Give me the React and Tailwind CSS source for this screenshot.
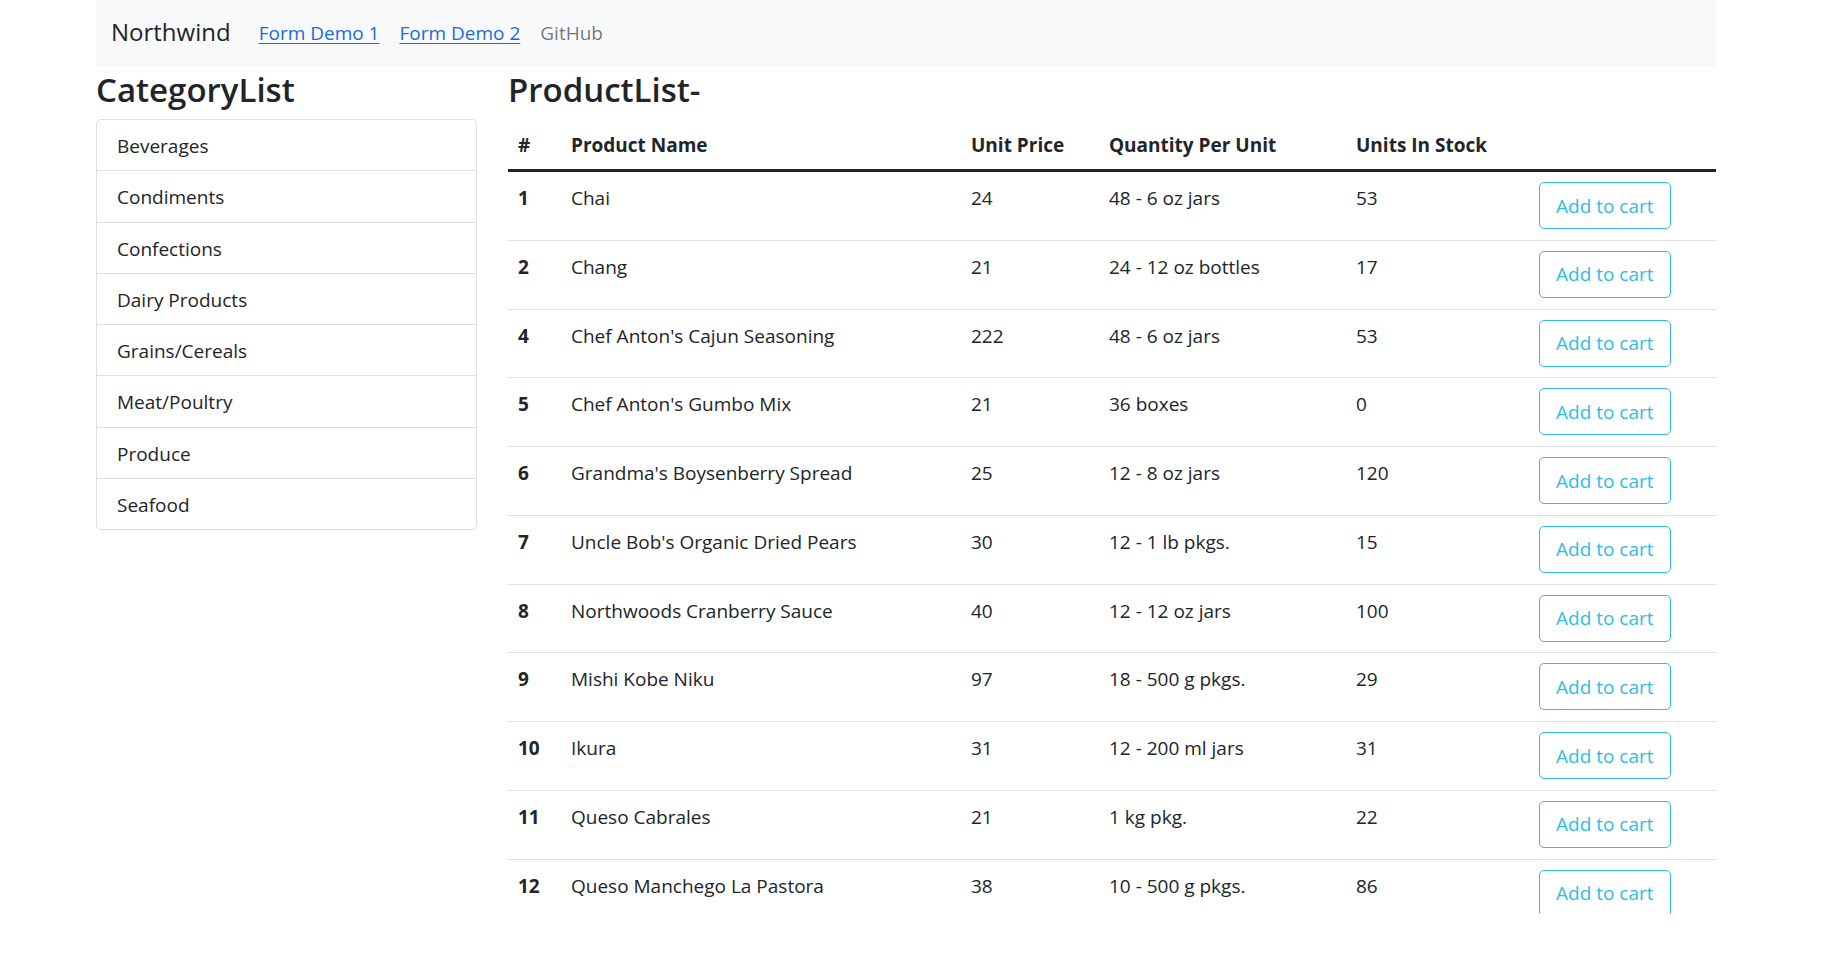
import React from "react";

const categories = [
  "Beverages",
  "Condiments",
  "Confections",
  "Dairy Products",
  "Grains/Cereals",
  "Meat/Poultry",
  "Produce",
  "Seafood",
];

const products = [
  { id: 1, name: "Chai", price: 24, qty: "48 - 6 oz jars", stock: 53 },
  { id: 2, name: "Chang", price: 21, qty: "24 - 12 oz bottles", stock: 17 },
  { id: 4, name: "Chef Anton's Cajun Seasoning", price: 222, qty: "48 - 6 oz jars", stock: 53 },
  { id: 5, name: "Chef Anton's Gumbo Mix", price: 21, qty: "36 boxes", stock: 0 },
  { id: 6, name: "Grandma's Boysenberry Spread", price: 25, qty: "12 - 8 oz jars", stock: 120 },
  { id: 7, name: "Uncle Bob's Organic Dried Pears", price: 30, qty: "12 - 1 lb pkgs.", stock: 15 },
  { id: 8, name: "Northwoods Cranberry Sauce", price: 40, qty: "12 - 12 oz jars", stock: 100 },
  { id: 9, name: "Mishi Kobe Niku", price: 97, qty: "18 - 500 g pkgs.", stock: 29 },
  { id: 10, name: "Ikura", price: 31, qty: "12 - 200 ml jars", stock: 31 },
  { id: 11, name: "Queso Cabrales", price: 21, qty: "1 kg pkg.", stock: 22 },
  { id: 12, name: "Queso Manchego La Pastora", price: 38, qty: "10 - 500 g pkgs.", stock: 86 },
];

const Navi = () => {
  return (
    <nav className="flex items-start h-[67px] pl-[15px] bg-[#f8f9fa]">
      <span className="mt-[17px] mr-[18px] text-[24px] leading-[30px] text-[#212529]">Northwind</span>
      <a href="#" className="mt-[18px] px-[10px] leading-[30px] text-[#1d6ae0] underline underline-offset-[3px]">
        Form Demo 1
      </a>
      <a href="#" className="mt-[18px] px-[10px] leading-[30px] text-[#1d6ae0] underline underline-offset-[3px]">
        Form Demo 2
      </a>
      <a href="#" className="mt-[18px] px-[10px] leading-[30px] text-black/55">
        GitHub
      </a>
    </nav>
  );
};

const CategoryList = () => {
  return (
    <div className="w-[381px] shrink-0">
      <h2 className="pt-[3px] pb-[9px] text-[33px] leading-[40px] font-semibold">CategoryList</h2>
      <ul className="border border-[#dfdfdf] rounded-[5px]">
        {categories.map((c, i) => (
          <li
            key={c}
            className={
              "px-[20px] pt-[11px] pb-[9.25px] leading-[30px] " +
              (i > 0 ? "border-t border-[#dfdfdf]" : "")
            }
          >
            {c}
          </li>
        ))}
      </ul>
    </div>
  );
};

const ProductList = () => {
  return (
    <div className="flex-1">
      <h2 className="pt-[3px] pb-[9px] text-[33px] leading-[40px] font-semibold">ProductList-</h2>
      <table className="w-full table-fixed border-collapse text-left">
        <colgroup>
          <col className="w-[53px]" />
          <col className="w-[400px]" />
          <col className="w-[138px]" />
          <col className="w-[247px]" />
          <col className="w-[183px]" />
          <col className="w-[187px]" />
        </colgroup>
        <thead>
          <tr className="border-b-[3px] border-[#212529]">
            <th className="px-[10px] pt-[11px] pb-[9px] leading-[30px] font-bold">#</th>
            <th className="px-[10px] pt-[11px] pb-[9px] leading-[30px] font-bold">Product Name</th>
            <th className="px-[10px] pt-[11px] pb-[9px] leading-[30px] font-bold">Unit Price</th>
            <th className="px-[10px] pt-[11px] pb-[9px] leading-[30px] font-bold">Quantity Per Unit</th>
            <th className="px-[10px] pt-[11px] pb-[9px] leading-[30px] font-bold">Units In Stock</th>
            <th className="px-[10px] pt-[11px] pb-[9px] leading-[30px]"></th>
          </tr>
        </thead>
        <tbody>
          {products.map((p) => (
            <tr key={p.id} className="border-b border-[#dee2e6] align-top">
              <th className="px-[10px] pt-[11px] leading-[30px] font-bold">{p.id}</th>
              <td className="px-[10px] pt-[11px] leading-[30px]">{p.name}</td>
              <td className="px-[10px] pt-[11px] leading-[30px]">{p.price}</td>
              <td className="px-[10px] pt-[11px] leading-[30px]">{p.qty}</td>
              <td className="px-[10px] pt-[11px] leading-[30px]">{p.stock}</td>
              <td className="px-[10px] pt-[10px] pb-[10.75px]">
                <button className="h-[47px] px-[16px] border border-[#2ebde3] rounded-[5px] text-[#2ebde3] leading-[30px] whitespace-nowrap">
                  Add to cart
                </button>
              </td>
            </tr>
          ))}
        </tbody>
      </table>
    </div>
  );
};

export default function App() {
  return (
    <div className="h-[914px] overflow-hidden bg-white font-['Open_Sans',sans-serif] text-[19px] text-[#212529]">
      <div className="w-[1620px] ml-[96px]">
        <Navi />
        <div className="flex gap-[31px]">
          <CategoryList />
          <ProductList />
        </div>
      </div>
    </div>
  );
}
